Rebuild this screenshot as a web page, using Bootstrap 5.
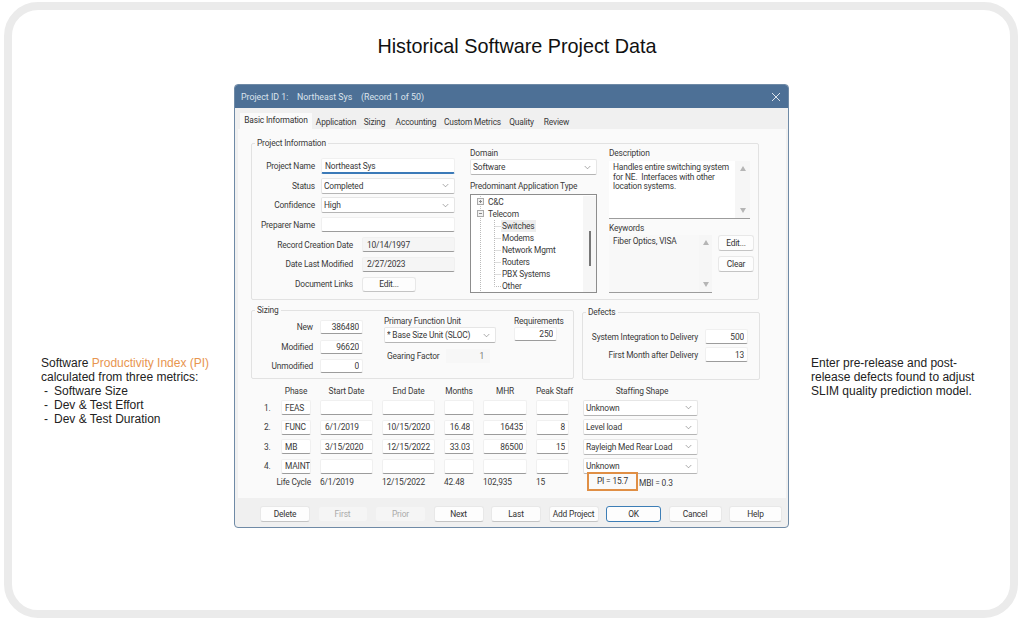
<!DOCTYPE html>
<html lang="en">
<head>
<meta charset="utf-8">
<title>Historical Software Project Data</title>
<link href="https://cdn.jsdelivr.net/npm/bootstrap@5.3.0/dist/css/bootstrap.min.css" rel="stylesheet">
<style>
html,body{margin:0;background:#fff;width:1024px;height:620px;overflow:hidden}
body{font-family:"Liberation Sans",Arial,sans-serif;color:#1f1f1f}
.frame{width:1014px;height:616px;margin:2px 0 0 4px;border:8px solid #ebebeb;border-radius:34px}
.page-title{font-size:19.8px;line-height:22px;color:#111;text-align:center;padding:25px 0 0 12px;margin:0 0 27px;font-weight:400}
.note{font-size:12px;line-height:14px;color:#222;margin-top:272px}
.note-l{width:193px;margin-left:29px}
.note-r{width:175px;margin-left:22px}
.hl{color:#e8954f}
.dash{width:10px;margin-left:3px}
.dlg{width:555px;height:444px;border:1px solid #6f8aa6;border-radius:4px;background:#f0f0f0;overflow:hidden;font-family:Roboto,"Noto Sans",sans-serif;font-size:8.4px;line-height:10px;letter-spacing:-.16px;color:#3a3a3a;flex:none}
.ttl{height:23px;background:#4d7096;color:#dce4ed;padding:0 7px 0 6px;font-size:8.8px;letter-spacing:0}
.ttl span{white-space:pre}
.tabs{height:21px;padding-left:5px;border:0;flex-wrap:nowrap;align-items:flex-end}
.tabs .nav-link{height:14px;border:0;border-radius:0;padding:2px 0 0;font-size:8.4px;line-height:10px;color:#3a3a3a;text-align:center;background:none;margin:0;white-space:nowrap}
.tabs .nav-link.active{height:16px;background:#fafafa;color:#333}
.tw1{width:72px}.tw2{width:48px}.tw3{width:29px}.tw4{width:54px}.tw5{width:59px}.tw6{width:39px}.tw7{width:31px}
.pane{margin-left:3px;width:548px;height:369px;background:#fafafa;padding:8px 0 0 13px}
fieldset.grp{border:1px solid #e2e2e2;border-radius:2px;padding:0;margin:0;min-width:0}
fieldset.grp legend{float:none;width:auto;font-size:8.4px;line-height:12px;margin:0 0 0 3px;padding:0 2px;color:#3a3a3a}
fieldset.g-info{width:508px;height:163px}
fieldset.g-size{width:323px;height:75px;margin-top:4px}
fieldset.g-def{width:178px;height:74px;margin:6px 0 0 8px}
.col1{width:204px;padding-top:9px}
.col2{width:127px;margin-left:14px}
.col3{width:145px;margin-left:12px}
.frow{display:flex;align-items:center;height:16px;margin-bottom:3.67px}
.lab{text-align:right;flex:none;white-space:nowrap}
.l64{width:63px;margin-right:6px}
.l102{width:101px;margin-right:9px}
input.form-control,select.form-select{height:15px;min-height:0;padding:0 0 0 3px;font-size:8.4px;letter-spacing:-.16px;line-height:10px;color:#3a3a3a;border:1px solid #f0f0f0;border-bottom-color:#9c9c9c;border-radius:2px;background-color:#fff;box-shadow:none}
select.form-select{height:16px;padding-right:12px;padding-left:2px;background-image:url("data:image/svg+xml,%3csvg xmlns='http://www.w3.org/2000/svg' viewBox='0 0 8 5'%3e%3cpath fill='none' stroke='%23777' stroke-width='.7' d='M.8.8 4 4 7.2.8'/%3e%3c/svg%3e");background-position:right 5px center;background-size:7px 5px;border-color:#e6e6e6;border-bottom-color:#b5b5b5}
input.form-control[readonly]{background:#f5f5f5}
input.focus-f{border-bottom:2px solid #3b7ab8;height:16px}
input.form-control.pd4{padding-left:4px}
input.form-control.nr{text-align:right;padding:0 3px 0 0}
.w134{width:134px}.w93{width:93px}
.w43{width:43px}
.dbtn{font-family:inherit;font-size:8.4px;letter-spacing:-.16px;line-height:10px;padding:0;color:#333;background:#fdfdfd;border:1px solid #e8e8e8;border-bottom-color:#c4c4c4;border-radius:3px;white-space:nowrap}
.b-links{width:54px;height:15px;margin-top:1px}
.hdr8{line-height:8px;height:8px;white-space:nowrap}
.sel-top{margin-top:2px}
.pred{margin-top:7px}
.tree{height:99px;border:1px solid #8d8d8d;background:#fff;padding-top:1px;overflow:hidden;margin-top:4px}
.tree-rows{width:113px}
.trow{height:12px;line-height:12px;display:flex;white-space:nowrap}
.trow svg{flex:none}
.sel{background:#eee;padding:0 1px;margin-left:-1px;height:12px}
.sb{width:13px;background:#f6f6f6;flex:none;padding:5px 0;align-items:center}
.tri-u{width:0;height:0;border:3.5px solid transparent;border-top:0;border-bottom:5px solid #b5b5b5}
.tri-d{width:0;height:0;border:3.5px solid transparent;border-bottom:0;border-top:5px solid #b5b5b5}
.thumb{width:2px;height:35px;background:#777;margin-top:30px}
.dsc{width:141px;height:58px;background:#fff;border-bottom:1px solid #9c9c9c;margin-top:4px}
.dsc-t{padding:2px 0 0 4px;white-space:pre;flex:1;line-height:9.7px}
.sb2{width:15px}
.kwl{margin-top:5px}
.kw-row{margin-top:3px}
.kw{width:103px;height:58px;background:#f8f8f8;border-bottom:1px solid #9c9c9c}
.kw-t{padding:1px 0 0 4px;flex:1}
.side{margin-left:6px;gap:5px}
.b-side{width:36px;height:16px}
.csz-a{width:112px;padding-top:4px}
.csz-a .frow{margin-bottom:5.67px;height:14px}
.l62{width:61px;margin-right:7px}
input.form-control.h14{height:14px}
.csz-b{width:112px;margin-left:20px}
.csz-c{width:50px;margin-left:18px}
.rq{margin-top:1px}
.below-hdr{margin-top:2px}
.gear{margin-top:6px;padding-left:3px;height:14px}
.g-lab{width:59px}
.g-val{width:44px;height:14px;background:#f7f7f7;text-align:right;padding:2px 6px 0 0;color:#777}
.def-in{padding:11px 0 0 5px}
.def-in .frow{height:15px;margin-bottom:3px}
.l110{width:110px;margin-right:7px}
.ptab{display:grid;grid-template-columns:8px 30px 53px 53px 30px 44px 33px 115px;column-gap:9px;margin:6px 0 0 13px;align-items:center}
.ptab .hc{text-align:center;height:11px;line-height:11px;margin-bottom:2.5px;white-space:nowrap}
.ptab .hc-peak{text-align:left}
.ptab .hc-shape{padding-left:13px}
.ptab input.form-control{height:15px;width:100%}
.rowgap{margin-bottom:3.67px}
.ptab select.form-select{margin-left:5px;height:16px;width:115px}
.lc{grid-column:1/3;text-align:right}
.lcv{margin-bottom:2px}
.pi-box{width:51px;height:19px;border:2px solid #e08f45;margin:-2px 0 0 9px;text-align:center;line-height:15px;flex:none;color:#333}
.mbi{margin-left:1px;white-space:nowrap}
.foot{height:29px;padding:8px 0 0 25px;gap:7.5px}
.foot .dbtn{height:15.5px;flex:none}
.foot .dbtn:disabled{opacity:1;color:#aaa;background:#f5f5f5;border-color:#f0f0f0}
.w50{width:50px}.w51{width:51px}.w55{width:55px}.w53{width:53px}
.dbtn.okb{border:1px solid #3d7eb6}
</style>
</head>
<body>
<div class="frame">
  <h1 class="page-title">Historical Software Project Data</h1>
  <div class="d-flex">
    <div class="note note-l">
      <div>Software <span class="hl">Productivity Index (PI)</span></div>
      <div>calculated from three metrics:</div>
      <div class="d-flex"><span class="dash">-</span><span>Software Size</span></div>
      <div class="d-flex"><span class="dash">-</span><span>Dev &amp; Test Effort</span></div>
      <div class="d-flex"><span class="dash">-</span><span>Dev &amp; Test Duration</span></div>
    </div>
    <div class="dlg">
      <div class="ttl d-flex align-items-center justify-content-between">
        <span>Project ID 1:    Northeast Sys    (Record 1 of 50)</span>
        <svg width="10" height="10" viewBox="0 0 10 10"><path d="M1 1l8 8M9 1l-8 8" stroke="#dce4ed" stroke-width="1" fill="none"/></svg>
      </div>
      <ul class="nav nav-tabs tabs">
        <li class="nav-item"><a class="nav-link active tw1" href="#">Basic Information</a></li>
        <li class="nav-item"><a class="nav-link tw2" href="#">Application</a></li>
        <li class="nav-item"><a class="nav-link tw3" href="#">Sizing</a></li>
        <li class="nav-item"><a class="nav-link tw4" href="#">Accounting</a></li>
        <li class="nav-item"><a class="nav-link tw5" href="#">Custom Metrics</a></li>
        <li class="nav-item"><a class="nav-link tw6" href="#">Quality</a></li>
        <li class="nav-item"><a class="nav-link tw7" href="#">Review</a></li>
      </ul>
      <div class="pane">
        <fieldset class="grp g-info">
          <legend>Project Information</legend>
          <div class="d-flex">
            <div class="col1">
              <div class="frow"><span class="lab l64">Project Name</span><input class="form-control focus-f w134" value="Northeast Sys"></div>
              <div class="frow"><span class="lab l64">Status</span><select class="form-select w134"><option>Completed</option></select></div>
              <div class="frow"><span class="lab l64">Confidence</span><select class="form-select w134"><option>High</option></select></div>
              <div class="frow"><span class="lab l64">Preparer Name</span><input class="form-control w134"></div>
              <div class="frow"><span class="lab l102">Record Creation Date</span><input class="form-control w93 pd4" readonly value="10/14/1997"></div>
              <div class="frow"><span class="lab l102">Date Last Modified</span><input class="form-control w93 pd4" readonly value="2/27/2023"></div>
              <div class="frow"><span class="lab l102">Document Links</span><button class="btn dbtn b-links" type="button">Edit...</button></div>
            </div>
            <div class="col2">
              <div class="hdr8">Domain</div>
              <select class="form-select sel-top"><option>Software</option></select>
              <div class="hdr8 pred">Predominant Application Type</div>
              <div class="tree d-flex">
                <div class="tree-rows">
                  <div class="trow"><svg width="17" height="12" viewBox="0 0 17 12"><path d="M9.5 0V12" stroke="#c4c4c4" stroke-dasharray="1 1" fill="none"/><rect x="6.5" y="2.5" width="6" height="6" fill="#f2f2f2" stroke="#aaa"/><path d="M8 5.5h3M9.5 4v3" stroke="#888" fill="none"/></svg><span>C&amp;C</span></div>
                  <div class="trow"><svg width="17" height="12" viewBox="0 0 17 12"><path d="M9.5 0V12" stroke="#c4c4c4" stroke-dasharray="1 1" fill="none"/><rect x="6.5" y="2.5" width="6" height="6" fill="#f2f2f2" stroke="#aaa"/><path d="M8 5.5h3" stroke="#888" fill="none"/></svg><span>Telecom</span></div>
                  <div class="trow"><svg width="31" height="12" viewBox="0 0 31 12"><path d="M9.5 0V12M23.5 0V12M23.5 6.5H30" stroke="#bbb" stroke-dasharray="1 1" fill="none"/></svg><span class="sel">Switches</span></div>
                  <div class="trow"><svg width="31" height="12" viewBox="0 0 31 12"><path d="M9.5 0V12M23.5 0V12M23.5 6.5H30" stroke="#bbb" stroke-dasharray="1 1" fill="none"/></svg><span>Modems</span></div>
                  <div class="trow"><svg width="31" height="12" viewBox="0 0 31 12"><path d="M9.5 0V12M23.5 0V12M23.5 6.5H30" stroke="#bbb" stroke-dasharray="1 1" fill="none"/></svg><span>Network Mgmt</span></div>
                  <div class="trow"><svg width="31" height="12" viewBox="0 0 31 12"><path d="M9.5 0V12M23.5 0V12M23.5 6.5H30" stroke="#bbb" stroke-dasharray="1 1" fill="none"/></svg><span>Routers</span></div>
                  <div class="trow"><svg width="31" height="12" viewBox="0 0 31 12"><path d="M9.5 0V12M23.5 0V12M23.5 6.5H30" stroke="#bbb" stroke-dasharray="1 1" fill="none"/></svg><span>PBX Systems</span></div>
                  <div class="trow"><svg width="31" height="12" viewBox="0 0 31 12"><path d="M9.5 0V12M23.5 0V6.5H30" stroke="#bbb" stroke-dasharray="1 1" fill="none"/></svg><span>Other</span></div>
                </div>
                <div class="sb d-flex flex-column"><div class="thumb"></div></div>
              </div>
            </div>
            <div class="col3">
              <div class="hdr8">Description</div>
              <div class="dsc d-flex">
                <div class="dsc-t">Handles entire switching system
for NE.  Interfaces with other
location systems.</div>
                <div class="sb sb2 d-flex flex-column justify-content-between"><div class="tri-u"></div><div class="tri-d"></div></div>
              </div>
              <div class="hdr8 kwl">Keywords</div>
              <div class="d-flex kw-row">
                <div class="kw d-flex">
                  <div class="kw-t">Fiber Optics, VISA</div>
                  <div class="sb d-flex flex-column justify-content-between"><div class="tri-u"></div><div class="tri-d"></div></div>
                </div>
                <div class="side d-flex flex-column">
                  <button class="btn dbtn b-side" type="button">Edit...</button>
                  <button class="btn dbtn b-side" type="button">Clear</button>
                </div>
              </div>
            </div>
          </div>
        </fieldset>
        <div class="d-flex align-items-start">
          <fieldset class="grp g-size">
            <legend>Sizing</legend>
            <div class="d-flex">
              <div class="csz-a">
                <div class="frow"><span class="lab l62">New</span><input class="form-control w43 nr h14" value="386480"></div>
                <div class="frow"><span class="lab l62">Modified</span><input class="form-control w43 nr h14" value="96620"></div>
                <div class="frow"><span class="lab l62">Unmodified</span><input class="form-control w43 nr h14" value="0"></div>
              </div>
              <div class="csz-b">
                <div class="hdr8 rq">Primary Function Unit</div>
                <select class="form-select below-hdr"><option>* Base Size Unit  (SLOC)</option></select>
                <div class="d-flex align-items-center gear"><span class="g-lab">Gearing Factor</span><div class="g-val">1</div></div>
              </div>
              <div class="csz-c">
                <div class="hdr8 rq">Requirements</div>
                <input class="form-control w43 nr h14 below-hdr" value="250">
              </div>
            </div>
          </fieldset>
          <fieldset class="grp g-def">
            <legend>Defects</legend>
            <div class="def-in">
              <div class="frow"><span class="lab l110">System Integration to Delivery</span><input class="form-control w43 nr" value="500"></div>
              <div class="frow"><span class="lab l110">First Month after Delivery</span><input class="form-control w43 nr" value="13"></div>
            </div>
          </fieldset>
        </div>
        <div class="ptab">
          <div></div><div class="hc">Phase</div><div class="hc">Start Date</div><div class="hc">End Date</div><div class="hc">Months</div><div class="hc">MHR</div><div class="hc hc-peak">Peak Staff</div><div class="hc hc-shape">Staffing Shape</div>

          <div class="rowgap">1.</div><input class="form-control rowgap" value="FEAS"><input class="form-control rowgap"><input class="form-control rowgap"><input class="form-control rowgap"><input class="form-control rowgap"><input class="form-control rowgap"><select class="form-select rowgap"><option>Unknown</option></select>

          <div class="rowgap">2.</div><input class="form-control rowgap" value="FUNC"><input class="form-control rowgap pd4" value="6/1/2019"><input class="form-control rowgap pd4" value="10/15/2020"><input class="form-control rowgap nr" value="16.48"><input class="form-control rowgap nr" value="16435"><input class="form-control rowgap nr" value="8"><select class="form-select rowgap"><option>Level load</option></select>

          <div class="rowgap">3.</div><input class="form-control rowgap" value="MB"><input class="form-control rowgap pd4" value="3/15/2020"><input class="form-control rowgap pd4" value="12/15/2022"><input class="form-control rowgap nr" value="33.03"><input class="form-control rowgap nr" value="86500"><input class="form-control rowgap nr" value="15"><select class="form-select rowgap"><option>Rayleigh Med Rear Load</option></select>

          <div>4.</div><input class="form-control" value="MAINT"><input class="form-control"><input class="form-control"><input class="form-control"><input class="form-control"><input class="form-control"><select class="form-select"><option>Unknown</option></select>

          <div class="lc lcv">Life Cycle</div><div class="lcv">6/1/2019</div><div class="lcv">12/15/2022</div><div class="lcv">42.48</div><div class="lcv">102,935</div><div class="lcv">15</div>
          <div class="d-flex align-items-center"><div class="pi-box">PI = 15.7</div><span class="mbi">MBI = 0.3</span></div>
        </div>
      </div>
      <div class="foot d-flex">
        <button class="btn dbtn w50" type="button">Delete</button>
        <button class="btn dbtn w50" type="button" disabled>First</button>
        <button class="btn dbtn w51" type="button" disabled>Prior</button>
        <button class="btn dbtn w50" type="button">Next</button>
        <button class="btn dbtn w50" type="button">Last</button>
        <button class="btn dbtn w50" type="button">Add Project</button>
        <button class="btn dbtn okb w55" type="button">OK</button>
        <button class="btn dbtn w53" type="button">Cancel</button>
        <button class="btn dbtn w53" type="button">Help</button>
      </div>
    </div>
    <div class="note note-r">Enter pre-release and post-release defects found to adjust SLIM quality prediction model.</div>
  </div>
</div>
<script src="https://cdn.jsdelivr.net/npm/bootstrap@5.3.0/dist/js/bootstrap.bundle.min.js"></script>
</body>
</html>
